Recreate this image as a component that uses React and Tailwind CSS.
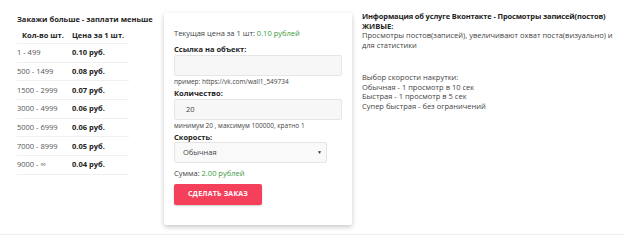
import React from 'react';

const rows = [
  ['1 - 499', '0.10 руб.'],
  ['500 - 1499', '0.08 руб.'],
  ['1500 - 2999', '0.07 руб.'],
  ['3000 - 4999', '0.06 руб.'],
  ['5000 - 6999', '0.06 руб.'],
  ['7000 - 8999', '0.05 руб.'],
  ['9000 - ∞', '0.04 руб.'],
];

export default function App() {
  return (
    <div className="w-[624px] h-[241px] bg-white text-[#333] font-['Open_Sans',sans-serif] relative">
      <div className="flex h-[235px] border-b border-[#eeeeee]">
        {/* price table */}
        <div className="w-[164px] pl-[17px] pt-[14px]">
          <div className="text-[7.5px] font-bold text-[#222] leading-[10px]">Закажи больше - заплати меньше</div>
          <div className="w-[112px] mt-[4px]">
            <div className="flex text-[7.5px] font-bold text-[#222] h-[16px] items-center border-b border-[#f0f0f0]">
              <div className="w-[55px] pl-[5px]">Кол-во шт.</div>
              <div>Цена за 1 шт.</div>
            </div>
            {rows.map(r => (
              <div key={r[0]} className="flex text-[7.5px] h-[18.7px] items-center border-b border-[#f0f0f0]">
                <div className="w-[55px] text-[#555]">{r[0]}</div>
                <div className="font-bold text-[#222]">{r[1]}</div>
              </div>
            ))}
          </div>
        </div>

        {/* order form card */}
        <div className="w-[188px] h-[212px] mt-[13px] bg-white rounded-[2px] shadow-[0_2px_5px_rgba(0,0,0,0.22)] px-[10px] pt-[15px]">
          <div className="text-[7.5px] text-[#444] leading-[10px]">
            Текущая цена за 1 шт: <span className="text-[#3a9a3a]">0.10 рублей</span>
          </div>
          <div className="text-[7.5px] font-bold text-[#222] mt-[6px] leading-[10px]">Ссылка на объект:</div>
          <div className="mt-[1px] h-[21px] w-[168px] bg-[#f7f7f7] border border-[#e6e6e6] rounded-[2px]"></div>
          <div className="text-[6.5px] text-[#444] mt-[1px] leading-[10px]">пример: https://vk.com/wall1_549734</div>
          <div className="text-[7.5px] font-bold text-[#222] mt-[1px] leading-[10px]">Количество:</div>
          <div className="mt-[1px] h-[21px] w-[168px] bg-[#f7f7f7] border border-[#e6e6e6] rounded-[2px] flex items-center pl-[11px] text-[7.5px] text-[#444]">20</div>
          <div className="text-[6.5px] text-[#444] mt-[1px] leading-[10px]">минимум 20 , максимум 100000, кратно 1</div>
          <div className="text-[7.5px] font-bold text-[#222] mt-[1px] leading-[10px]">Скорость:</div>
          <div className="mt-[0px] h-[21px] w-[153px] bg-[#f9f9f9] border border-[#e6e6e6] rounded-[2px] flex items-center justify-between pl-[8px] pr-[4px] text-[7.5px] text-[#444]">
            <span>Обычная</span>
            <span className="text-[5px] text-[#333]">▼</span>
          </div>
          <div className="text-[7.5px] text-[#444] mt-[5px] leading-[10px]">
            Сумма: <span className="text-[#3a9a3a]">2.00 рублей</span>
          </div>
          <div className="mt-[6px] w-[88px] h-[21px] bg-[#f5405c] rounded-[2px] shadow-[0_1px_2px_rgba(0,0,0,0.2)] flex items-center justify-center text-white text-[7px] font-bold tracking-[0.2px]">
            СДЕЛАТЬ ЗАКАЗ
          </div>
        </div>

        {/* info */}
        <div className="pl-[10px] pt-[12px] w-[262px] text-[7.5px] leading-[9.5px] text-[#444]">
          <div className="font-bold text-[#222] whitespace-nowrap tracking-[-0.15px]">Информация об услуге Вконтакте - Просмотры записей(постов)</div>
          <div className="font-bold text-[#222]">ЖИВЫЕ:</div>
          <div>Просмотры постов(записей), увеличивают охват поста(визуально) и для статистики</div>
          <div className="mt-[23px]">Выбор скорости накрутки:</div>
          <div>Обычная - 1 просмотр в 10 сек</div>
          <div>Быстрая - 1 просмотр в 5 сек</div>
          <div>Супер быстрая - без ограничений</div>
        </div>
      </div>
    </div>
  );
}
